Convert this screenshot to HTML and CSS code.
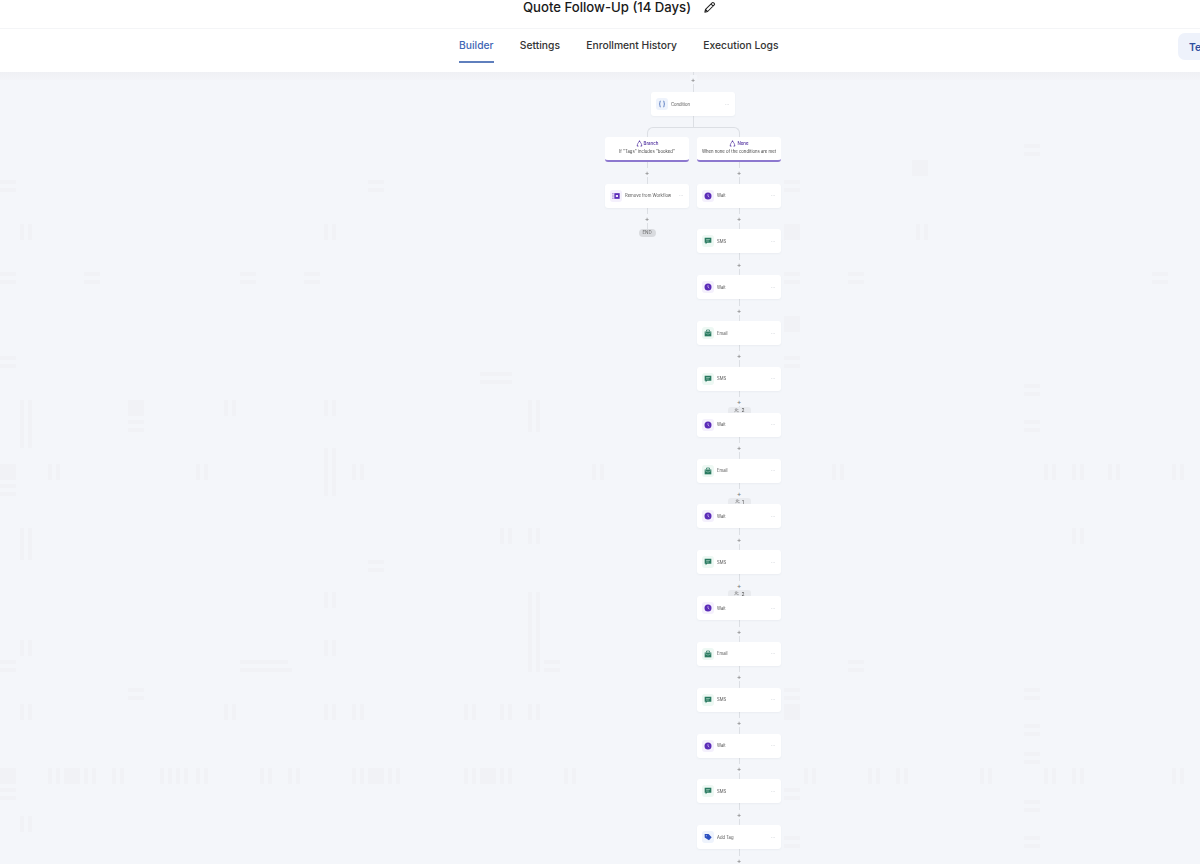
FILE: index.html

```html
<!DOCTYPE html>
<html>
<head>
<meta charset="UTF-8">
<title>Quote Follow-Up (14 Days)</title>
<link rel="stylesheet" href="styles.css">
</head>
<body>
  <svg class="sprites" width="0" height="0">
    <symbol id="i-braces" viewBox="0 0 12 12"><path d="M4.5 2.5C3.3 2.5 3.5 3.3 3.5 4.5S3.3 5.7 2.6 6C3.3 6.3 3.5 6.3 3.5 7.5S3.3 9.5 4.5 9.5M7.5 2.5C8.7 2.5 8.5 3.3 8.5 4.5S8.7 5.7 9.4 6C8.7 6.3 8.5 6.3 8.5 7.5S8.7 9.5 7.5 9.5" fill="none" stroke="#3f66b5" stroke-width="1"/></symbol>
    <symbol id="i-clock" viewBox="0 0 12 12"><circle cx="6" cy="6" r="4.2" fill="#5b2bb8"/><path d="M6 3.8V6.2L7.5 7.4" fill="none" stroke="#e8e0fa" stroke-width=".8"/></symbol>
    <symbol id="i-sms" viewBox="0 0 12 12"><path d="M2 2.2H10V8.2H5L3.2 10V8.2H2Z" fill="#2a7a60"/><path d="M3.8 4.2H8.2M3.8 6H7" stroke="#d9f3e8" stroke-width=".6"/></symbol>
    <symbol id="i-mail" viewBox="0 0 12 12"><path d="M2 4.2H10V10H2Z" fill="#2a7a60"/><path d="M4.2 4.2V2.4H7.8V4.2" fill="none" stroke="#2a7a60" stroke-width=".9"/><path d="M2.2 5.4L6 7.4L9.8 5.4" fill="none" stroke="#d9f3e8" stroke-width=".5"/></symbol>
    <symbol id="i-tag" viewBox="0 0 12 12"><path d="M2 2.4H6.6L10.4 6.4L7.2 10L2 6.6Z" fill="#2b4fc0"/><circle cx="4" cy="4.4" r=".6" fill="#e4ebfb"/></symbol>
    <symbol id="i-remove" viewBox="0 0 12 12"><path d="M4 2.6H10.4V9.4H4Z" fill="#5b2bb8"/><path d="M5.8 4.8H8.4V7.2H5.8Z" fill="#efe9fb"/><path d="M1.4 3.4H3.2M1.4 6H3.2M1.4 8.6H3.2" stroke="#5b2bb8" stroke-width=".8"/></symbol>
    <symbol id="i-fork" viewBox="0 0 12 12"><path d="M6 1.5L2.5 7V10.5M6 1.5L9.5 7V10.5M4.5 10.5H2V9M7.5 10.5H10V9" fill="none" stroke="#4b2a9c" stroke-width="1"/><circle cx="6" cy="2" r="1" fill="#4b2a9c"/></symbol>
    <symbol id="i-user" viewBox="0 0 12 12"><circle cx="5" cy="3.6" r="2" fill="none" stroke="#555" stroke-width="1"/><path d="M1.6 10C1.6 7.6 3 6.8 5 6.8S8.4 7.6 8.4 10M8 2A2 2 0 0 1 8 5.4M9.2 7.2C10.2 7.8 10.6 8.8 10.6 10" fill="none" stroke="#555" stroke-width="1"/></symbol>
    <defs>
      <g id="v16"><rect width="4" height="16"/><rect x="8" width="4" height="16"/></g>
      <g id="v32"><rect width="4" height="32"/><rect x="8" width="4" height="32"/></g>
      <g id="v48"><rect width="4" height="48"/><rect x="8" width="4" height="48"/></g>
      <g id="v80"><rect width="4" height="80"/><rect x="8" width="4" height="80"/></g>
      <g id="h16"><rect width="16" height="4"/><rect y="8" width="16" height="4"/></g>
      <g id="h32"><rect width="32" height="4"/><rect y="8" width="32" height="4"/></g>
      <g id="h52"><rect width="48" height="4"/><rect y="8" width="52" height="4"/></g>
      <rect id="sq" width="16" height="16"/>
    </defs>
  </svg>

  <!-- faint ghost marks on the canvas -->
  <svg class="marks" viewBox="0 0 1200 864">
    <use href="#h16" x="0" y="180"/><use href="#h16" x="368" y="180"/>
    <use href="#v16" x="20" y="224"/><use href="#v16" x="324" y="224"/>
    <use href="#h16" x="0" y="272"/><use href="#h16" x="84" y="272"/><use href="#h16" x="240" y="272"/><use href="#h16" x="304" y="272"/>
    <use href="#h16" x="0" y="356"/><use href="#h32" x="480" y="372"/>
    <use href="#v48" x="20" y="400"/><use href="#sq" x="128" y="400"/><use href="#h16" x="128" y="420"/>
    <use href="#v16" x="224" y="400"/><use href="#v16" x="324" y="400"/><use href="#v32" x="528" y="400"/><use href="#v48" x="324" y="448"/>
    <use href="#sq" x="0" y="464"/><use href="#h16" x="0" y="484"/>
    <use href="#v16" x="48" y="464"/><use href="#v16" x="196" y="464"/><use href="#v16" x="352" y="464"/><use href="#v16" x="592" y="464"/>
    <use href="#v32" x="20" y="528"/><use href="#v16" x="500" y="528"/><use href="#v16" x="528" y="528"/>
    <use href="#h16" x="368" y="560"/>
    <use href="#v16" x="324" y="592"/><use href="#v80" x="528" y="592"/>
    <use href="#v16" x="20" y="640"/><use href="#v16" x="324" y="640"/>
    <use href="#h16" x="0" y="660"/><use href="#h52" x="240" y="660"/><use href="#h16" x="544" y="660"/>
    <use href="#h16" x="128" y="688"/>
    <use href="#v16" x="20" y="704"/><use href="#v16" x="224" y="704"/><use href="#v16" x="324" y="704"/><use href="#v16" x="352" y="704"/>
    <use href="#v16" x="464" y="704"/><use href="#v16" x="500" y="704"/><use href="#v16" x="528" y="704"/>
    <use href="#sq" x="0" y="768"/><use href="#v16" x="48" y="768"/><use href="#sq" x="64" y="768"/><use href="#v16" x="84" y="768"/>
    <use href="#v16" x="112" y="768"/><use href="#v16" x="160" y="768"/><use href="#v16" x="176" y="768"/><use href="#v16" x="196" y="768"/>
    <use href="#v16" x="260" y="768"/><use href="#v16" x="288" y="768"/><use href="#v16" x="352" y="768"/><use href="#sq" x="368" y="768"/>
    <use href="#v16" x="388" y="768"/><use href="#v16" x="464" y="768"/><use href="#sq" x="480" y="768"/><use href="#v16" x="500" y="768"/>
    <use href="#v16" x="564" y="768"/><use href="#h16" x="0" y="788"/><use href="#v16" x="20" y="816"/>

    <use href="#sq" x="912" y="160"/><use href="#h16" x="1024" y="144"/>
    <use href="#h16" x="784" y="180"/><use href="#sq" x="784" y="224"/><use href="#v16" x="916" y="224"/>
    <use href="#h16" x="784" y="272"/><use href="#h16" x="848" y="272"/><use href="#h16" x="1152" y="272"/>
    <use href="#sq" x="784" y="316"/><use href="#h16" x="784" y="356"/><use href="#h16" x="1024" y="384"/><use href="#h16" x="1024" y="420"/>
    <use href="#v16" x="832" y="464"/><use href="#v16" x="1044" y="464"/><use href="#v16" x="1072" y="464"/><use href="#v16" x="1108" y="464"/><use href="#v16" x="1172" y="464"/>
    <use href="#v16" x="1072" y="528"/><use href="#h16" x="848" y="660"/>
    <use href="#h16" x="784" y="688"/><use href="#sq" x="784" y="704"/><use href="#h16" x="1024" y="688"/><use href="#h16" x="1024" y="724"/><use href="#h16" x="1024" y="752"/>
    <use href="#v16" x="804" y="768"/><use href="#v16" x="868" y="768"/><use href="#v16" x="896" y="768"/><use href="#v16" x="980" y="768"/>
    <use href="#v16" x="1044" y="768"/><use href="#v16" x="1072" y="768"/><use href="#v16" x="1172" y="768"/>
    <use href="#h16" x="784" y="788"/><use href="#h16" x="1024" y="800"/><use href="#h16" x="784" y="836"/><use href="#h16" x="1024" y="836"/>
  </svg>

  <div class="title-row">
    <h1>Quote Follow-Up (14 Days)</h1>
    <svg class="pencil" viewBox="0 0 14 14"><path d="M2 12L2.7 9L9.8 1.9C10.3 1.4 11 1.4 11.5 1.9L12.1 2.5C12.6 3 12.6 3.7 12.1 4.2L5 11.3ZM8.6 3.1L10.9 5.4M2.7 9L5 11.3" fill="none" stroke="#222" stroke-width="1.1" stroke-linejoin="round"/></svg>
  </div>

  <div class="tabs">
    <a class="tab active">Builder</a>
    <a class="tab">Settings</a>
    <a class="tab">Enrollment History</a>
    <a class="tab">Execution Logs</a>
    <button class="test-btn">Test Workflow</button>
  </div>

  <div class="canvas">
    <div class="flow">
      <div class="center-col">
        <div class="conn conn-top"><span class="plus">+</span></div>
        <div class="node">
          <span class="tile tile-blue"><svg><use href="#i-braces"/></svg></span>
          <span class="label">Condition</span><span class="dots">···</span>
        </div>
        <div class="fork"><div class="fork-stem"></div><div class="fork-arms"><div class="arm arm-left"></div><div class="arm arm-right"></div></div></div>
      </div>

      <div class="branches">
        <div class="branch-col">
          <div class="branch-card">
            <div class="branch-name"><svg><use href="#i-fork"/></svg>Branch</div>
            <div class="branch-rule">If "Tags" includes "booked"</div>
          </div>
          <div class="conn conn-first"><span class="plus">+</span></div>
          <div class="node">
            <span class="tile tile-purple"><svg><use href="#i-remove"/></svg></span>
            <span class="label">Remove from Workflow</span><span class="dots">···</span>
          </div>
          <div class="conn"><span class="plus">+</span></div>
          <div class="end-pill">END</div>
        </div>

        <div class="branch-col">
          <div class="branch-card">
            <div class="branch-name"><svg><use href="#i-fork"/></svg>None</div>
            <div class="branch-rule">When none of the conditions are met</div>
          </div>
          <div class="conn conn-first"><span class="plus">+</span></div>
          <div class="node"><span class="tile tile-purple"><svg><use href="#i-clock"/></svg></span><span class="label">Wait</span><span class="dots">···</span></div>
          <div class="conn"><span class="plus">+</span></div>
          <div class="node"><span class="tile tile-green"><svg><use href="#i-sms"/></svg></span><span class="label">SMS</span><span class="dots">···</span></div>
          <div class="conn"><span class="plus">+</span></div>
          <div class="node"><span class="tile tile-purple"><svg><use href="#i-clock"/></svg></span><span class="label">Wait</span><span class="dots">···</span></div>
          <div class="conn"><span class="plus">+</span></div>
          <div class="node"><span class="tile tile-green"><svg><use href="#i-mail"/></svg></span><span class="label">Email</span><span class="dots">···</span></div>
          <div class="conn"><span class="plus">+</span></div>
          <div class="node"><span class="tile tile-green"><svg><use href="#i-sms"/></svg></span><span class="label">SMS</span><span class="dots">···</span></div>
          <div class="conn"><span class="plus">+</span><span class="count"><svg><use href="#i-user"/></svg>2</span></div>
          <div class="node"><span class="tile tile-purple"><svg><use href="#i-clock"/></svg></span><span class="label">Wait</span><span class="dots">···</span></div>
          <div class="conn"><span class="plus">+</span></div>
          <div class="node"><span class="tile tile-green"><svg><use href="#i-mail"/></svg></span><span class="label">Email</span><span class="dots">···</span></div>
          <div class="conn"><span class="plus">+</span><span class="count"><svg><use href="#i-user"/></svg>1</span></div>
          <div class="node"><span class="tile tile-purple"><svg><use href="#i-clock"/></svg></span><span class="label">Wait</span><span class="dots">···</span></div>
          <div class="conn"><span class="plus">+</span></div>
          <div class="node"><span class="tile tile-green"><svg><use href="#i-sms"/></svg></span><span class="label">SMS</span><span class="dots">···</span></div>
          <div class="conn"><span class="plus">+</span><span class="count"><svg><use href="#i-user"/></svg>2</span></div>
          <div class="node"><span class="tile tile-purple"><svg><use href="#i-clock"/></svg></span><span class="label">Wait</span><span class="dots">···</span></div>
          <div class="conn"><span class="plus">+</span></div>
          <div class="node"><span class="tile tile-green"><svg><use href="#i-mail"/></svg></span><span class="label">Email</span><span class="dots">···</span></div>
          <div class="conn"><span class="plus">+</span></div>
          <div class="node"><span class="tile tile-green"><svg><use href="#i-sms"/></svg></span><span class="label">SMS</span><span class="dots">···</span></div>
          <div class="conn"><span class="plus">+</span></div>
          <div class="node"><span class="tile tile-purple"><svg><use href="#i-clock"/></svg></span><span class="label">Wait</span><span class="dots">···</span></div>
          <div class="conn"><span class="plus">+</span></div>
          <div class="node"><span class="tile tile-green"><svg><use href="#i-sms"/></svg></span><span class="label">SMS</span><span class="dots">···</span></div>
          <div class="conn"><span class="plus">+</span></div>
          <div class="node"><span class="tile tile-blue"><svg><use href="#i-tag"/></svg></span><span class="label">Add Tag</span><span class="dots">···</span></div>
          <div class="conn"><span class="plus">+</span></div>
        </div>
      </div>
    </div>
  </div>
</body>
</html>
```

FILE: styles.css

```css
html, body {
  margin: 0;
  height: 864px;
  overflow: hidden;
}

body {
  font-family: Inter, "Liberation Sans", sans-serif;
  background-color: #f4f6fa;
  color: #222;
}

.sprites {
  display: block;
  height: 0;
}

.marks {
  position: absolute;
  left: 0;
  top: 0;
  width: 1200px;
  height: 864px;
  fill: #f1f2f6;
}

.title-row,
.tabs {
  position: relative;
}

.title-row {
  height: 28px;
  display: flex;
  align-items: flex-start;
  padding-left: 523px;
  background-color: #fff;
  border-bottom: 1px solid #f4f5f7;
}

h1 {
  margin: 0;
  font-size: 13.15px;
  line-height: 14px;
  font-weight: 500;
  color: #1a1a1a;
  white-space: nowrap;
}

.pencil {
  width: 13px;
  height: 13px;
  margin: 1px 0 0 12px;
}

.tabs {
  height: 43px;
  display: flex;
  align-items: stretch;
  gap: 26.3px;
  padding-left: 459px;
  background-color: #fff;
}

.tab {
  font-size: 10.3px;
  font-weight: 500;
  line-height: 32px;
  height: 32px;
  color: #333;
  white-space: nowrap;
}

.tab.active {
  color: #3f66b5;
  border-bottom: 2px solid #5f7fbd;
}

/* cut by the right edge of the window */
.test-btn {
  align-self: flex-start;
  flex: none;
  width: 110px;
  height: 27px;
  margin: 4px -88px 0 auto;
  padding: 0 0 0 11px;
  border: none;
  border-radius: 7px;
  background-color: #eef2fb;
  color: #2f4f9f;
  font-family: inherit;
  font-size: 10.3px;
  font-weight: 600;
  text-align: left;
  white-space: nowrap;
}

.canvas {
  position: relative;
  padding-left: 605px;
  background: linear-gradient(#eff0f4, #f3f4f8 8px, transparent 8px);
}

.flow {
  width: 176px;
  filter: blur(0.3px);
}

.center-col {
  display: flex;
  flex-direction: column;
  align-items: center;
  width: 176px;
}

.branches {
  display: flex;
  gap: 8px;
}

.branch-col {
  width: 84px;
  display: flex;
  flex-direction: column;
  align-items: center;
}

.node {
  position: relative;
  z-index: 1;
  box-sizing: border-box;
  width: 84px;
  height: 24px;
  flex: none;
  display: flex;
  align-items: center;
  padding: 0 5px;
  background-color: #fff;
  border-radius: 3px;
  box-shadow: 0 1px 2px rgba(60, 70, 100, 0.05);
}

.tile {
  width: 12px;
  height: 12px;
  flex: none;
  border-radius: 3px;
}

.tile svg {
  display: block;
  width: 10px;
  height: 10px;
  margin: 1px;
}

.tile-blue { background-color: #eef3fc; }
.tile-purple { background-color: #f4f0fc; }
.tile-green { background-color: #edf8f3; }

.label {
  margin-left: 3px;
  font-size: 4.2px;
  color: #555;
  white-space: nowrap;
}

.dots {
  margin-left: auto;
  padding-right: 1px;
  font-size: 6px;
  letter-spacing: -0.3px;
  color: #cdd0d6;
}

.conn {
  position: relative;
  width: 84px;
  height: 21.85px;
  flex: none;
  display: flex;
  align-items: center;
  justify-content: center;
  background: linear-gradient(#dcdfe4, #dcdfe4) center / 1px 100% no-repeat;
}

.conn-top {
  box-sizing: border-box;
  height: 20px;
  padding-bottom: 6px;
}

.conn-first {
  height: 22px;
}

.plus {
  width: 7px;
  height: 9px;
  background-color: #f4f6fa;
  font-size: 7px;
  line-height: 9px;
  text-align: center;
  color: #777;
}

.count {
  box-sizing: border-box;
  position: absolute;
  left: 31px;
  bottom: -3px;
  width: 23px;
  height: 9px;
  padding-bottom: 2px;
  display: flex;
  align-items: center;
  justify-content: center;
  gap: 2px;
  background-color: #e9ebef;
  border-radius: 3px;
  font-size: 5px;
  color: #555;
}

.count svg {
  width: 5px;
  height: 5px;
}

.fork {
  width: 92px;
  height: 21px;
  display: flex;
  flex-direction: column;
  align-items: center;
}

.fork-stem {
  width: 1px;
  height: 11px;
  flex: none;
  background-color: #dcdfe4;
}

.fork-arms {
  width: 93px;
  display: flex;
  flex: 1;
}

.arm {
  flex: 1;
  border-top: 1px solid #dcdfe4;
}

.arm-left {
  border-left: 1px solid #dcdfe4;
  border-top-left-radius: 6px;
}

.arm-right {
  border-right: 1px solid #dcdfe4;
  border-top-right-radius: 6px;
}

.branch-card {
  box-sizing: border-box;
  width: 84px;
  height: 24.5px;
  flex: none;
  padding-top: 2.5px;
  background-color: #fff;
  border-bottom: 2px solid #8d78cf;
  border-radius: 3px;
  text-align: center;
}

.branch-name {
  display: flex;
  align-items: center;
  justify-content: center;
  gap: 1px;
  height: 7px;
  font-size: 4.4px;
  font-weight: 500;
  color: #4b2a9c;
}

.branch-name svg {
  width: 7px;
  height: 7px;
}

.branch-rule {
  margin-top: 1.5px;
  font-size: 4.25px;
  line-height: 7px;
  color: #444;
  white-space: nowrap;
}

.end-pill {
  width: 17px;
  height: 8px;
  flex: none;
  background-color: #d9dbdf;
  border-radius: 4px;
  font-size: 4.4px;
  line-height: 8px;
  text-align: center;
  color: #666;
}
```
